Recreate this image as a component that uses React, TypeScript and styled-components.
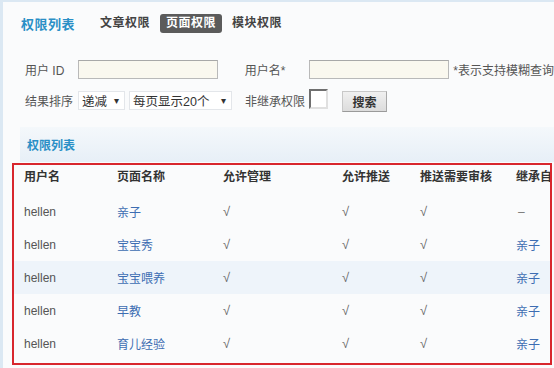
import styled, { createGlobalStyle } from 'styled-components';

const GlobalStyle = createGlobalStyle`
  html, body {
    margin: 0;
    padding: 0;
    width: 554px;
    height: 368px;
    overflow: hidden;
    background: #dbe8f3;
    font-family: "Liberation Sans", "Noto Sans CJK SC", sans-serif;
    font-size: 12px;
    color: #444;
  }
`;

interface Row {
  user: string;
  page: string;
  manage: boolean;
  push: boolean;
  audit: boolean;
  from: string | null;
}

const rows: Row[] = [
  { user: 'hellen', page: '亲子', manage: true, push: true, audit: true, from: null },
  { user: 'hellen', page: '宝宝秀', manage: true, push: true, audit: true, from: '亲子' },
  { user: 'hellen', page: '宝宝喂养', manage: true, push: true, audit: true, from: '亲子' },
  { user: 'hellen', page: '早教', manage: true, push: true, audit: true, from: '亲子' },
  { user: 'hellen', page: '育儿经验', manage: true, push: true, audit: true, from: '亲子' },
];

const tabs = ['文章权限', '页面权限', '模块权限'];
const headers = ['用户名', '页面名称', '允许管理', '允许推送', '推送需要审核', '继承自'];

export default function App() {
  return (
    <>
      <GlobalStyle />
      <Page>
        <TitleBar>
          <Title>权限列表</Title>
          <Tabs>
            {tabs.map((t) => (
              <Tab key={t} $active={t === '页面权限'}>
                {t}
              </Tab>
            ))}
          </Tabs>
        </TitleBar>

        <Form>
          <FormRow>
            <Label $w={53}>用户 ID</Label>
            <TextInput />
            <Label $w={65} $ml={27}>用户名*</Label>
            <TextInput />
            <Hint>*表示支持模糊查询</Hint>
          </FormRow>
          <FormRow>
            <Label $w={53}>结果排序</Label>
            <Select $w={47}>
              <span>递减</span>
              <Arrow>▾</Arrow>
            </Select>
            <Select $w={103} $ml={4}>
              <span>每页显示20个</span>
              <Arrow>▾</Arrow>
            </Select>
            <Label $w={64} $ml={13}>非继承权限</Label>
            <Checkbox />
            <SearchButton>搜索</SearchButton>
          </FormRow>
        </Form>

        <SectionBar>权限列表</SectionBar>

        <Box>
          <Grid>
            {headers.map((h) => (
              <HeadCell key={h}>{h}</HeadCell>
            ))}
            {rows.map((r, i) => (
              <DataRow key={r.page} $alt={i === 2}>
                <Cell>{r.user}</Cell>
                <Cell>
                  <Link>{r.page}</Link>
                </Cell>
                <Cell>{r.manage ? <Check>√</Check> : ''}</Cell>
                <Cell>{r.push ? <Check>√</Check> : ''}</Cell>
                <Cell>{r.audit ? <Check>√</Check> : ''}</Cell>
                <Cell>{r.from ? <Link>{r.from}</Link> : <Dash>–</Dash>}</Cell>
              </DataRow>
            ))}
          </Grid>
        </Box>
      </Page>
    </>
  );
}

const Page = styled.div`
  margin: 2px 0 0 3px;
  height: 366px;
  background: #fafbfc;
  display: flex;
  flex-direction: column;
`;

const TitleBar = styled.div`
  display: flex;
  align-items: center;
  height: 40px;
  padding: 2px 0 0 18px;
  box-sizing: border-box;
`;

const Title = styled.div`
  font-size: 13px;
  font-weight: bold;
  color: #2a8fc6;
  letter-spacing: 0.5px;
  width: 79px;
`;

const Tabs = styled.div`
  display: flex;
  align-items: center;
  gap: 10px;
`;

const Tab = styled.div<{ $active?: boolean }>`
  font-size: 12px;
  font-weight: bold;
  letter-spacing: 0.5px;
  color: ${(p) => (p.$active ? '#ffffff' : '#444')};
  background: ${(p) => (p.$active ? '#5b5b5b' : 'transparent')};
  border-radius: 3px;
  padding: 0 ${(p) => (p.$active ? '6px' : '0')};
  height: 19px;
  line-height: 19px;
`;

const Form = styled.div`
  display: flex;
  flex-direction: column;
  gap: 12px;
  padding: 18px 0 0 22px;
  height: 85px;
  box-sizing: border-box;
`;

const FormRow = styled.div`
  display: flex;
  align-items: center;
  height: 19px;
`;

const Label = styled.div<{ $w: number; $ml?: number }>`
  width: ${(p) => p.$w}px;
  margin-left: ${(p) => p.$ml ?? 0}px;
  color: #555;
  white-space: nowrap;
  font-size: 12px;
`;

const TextInput = styled.div`
  width: 139px;
  height: 17px;
  border: 1px solid #b9b9b9;
  border-top-color: #a8a8a8;
  background: #faf8ef;
`;

const Hint = styled.div`
  margin-left: 4px;
  color: #555;
  white-space: nowrap;
`;

const Select = styled.div<{ $w: number; $ml?: number }>`
  width: ${(p) => p.$w}px;
  margin-left: ${(p) => p.$ml ?? 0}px;
  height: 19px;
  box-sizing: border-box;
  border: 1px solid #e3e6ea;
  background: #ffffff;
  display: flex;
  align-items: center;
  justify-content: space-between;
  padding: 0 5px 0 3px;
  color: #333;
  font-size: 12.5px;
`;

const Arrow = styled.span`
  font-size: 10px;
  color: #333;
`;

const Checkbox = styled.div`
  width: 15px;
  height: 16px;
  border: 2px solid;
  border-color: #6f6f6f #e0e0e0 #e0e0e0 #6f6f6f;
  background: #fff;
  margin-top: -4px;
`;

const SearchButton = styled.div`
  margin-left: 14px;
  width: 45px;
  height: 21px;
  box-sizing: border-box;
  border: 1px solid #c8c8c8;
  border-bottom-color: #9a9a9a;
  border-right-color: #a8a8a8;
  background: linear-gradient(#f0f0f0, #dcdcdc);
  display: flex;
  align-items: center;
  justify-content: center;
  font-weight: bold;
  color: #333;
  font-size: 12px;
  margin-top: 1px;
`;

const SectionBar = styled.div`
  margin-left: 17px;
  height: 35px;
  background: linear-gradient(#f4f8fb, #e7eff7);
  display: flex;
  align-items: center;
  padding-left: 7px;
  font-weight: bold;
  font-size: 12px;
  color: #2a8fc6;
`;

const Box = styled.div`
  margin: 1px 0 0 9px;
  width: 540px;
  height: 202px;
  box-sizing: border-box;
  border: 2px solid #d8262d;
  overflow: hidden;
`;

const Grid = styled.div`
  width: 560px;
  display: grid;
  grid-template-columns: 103px 106px 119px 78px 96px 58px;
`;

const HeadCell = styled.div`
  height: 30px;
  box-sizing: border-box;
  padding: 4px 0 0 0;
  font-weight: bold;
  color: #333;
  font-size: 12px;
  line-height: 17px;
  white-space: nowrap;
  &:first-child {
    padding-left: 10px;
  }
`;

const DataRow = styled.div<{ $alt?: boolean }>`
  display: contents;
  & > div {
    background: ${(p) => (p.$alt ? '#eef4fa' : 'transparent')};
  }
`;

const Cell = styled.div`
  height: 33px;
  display: flex;
  align-items: center;
  color: #555;
  font-size: 12px;
  &:first-child {
    padding-left: 10px;
  }
`;

const Link = styled.span`
  color: #3d6db2;
`;

const Check = styled.span`
  color: #666;
  font-size: 13px;
`;

const Dash = styled.span`
  color: #777;
  padding-left: 2px;
`;
